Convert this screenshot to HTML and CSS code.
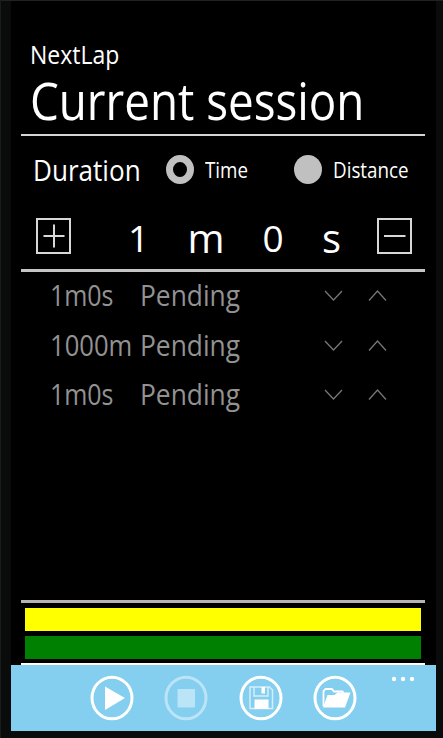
FILE: index.html
```html
<!DOCTYPE html>
<html lang="en">
<head>
<meta charset="utf-8">
<title>NextLap</title>
<link rel="stylesheet" href="styles.css">
</head>
<body>
<div class="phone">
  <main class="page">
    <header class="header">
      <div class="app">NextLap</div>
      <h1 class="title">Current session</h1>
    </header>
    <section class="mode">
      <span class="mode-name">Duration</span>
      <span class="radio on"></span>
      <span class="option">Time</span>
      <span class="radio second"></span>
      <span class="option distance">Distance</span>
    </section>
    <section class="picker">
      <svg class="step" viewBox="0 0 36 37"><path d="M1 1H34V35H1ZM7.500 18H28.500M18 6.500V29.500"/></svg>
      <span class="digit">1</span>
      <span class="unit">m</span>
      <span class="digit">0</span>
      <span class="unit">s</span>
      <svg class="step" viewBox="0 0 36 37"><path d="M1 1H34V35H1ZM7 18H28.500"/></svg>
    </section>
    <section class="laps">
      <div class="lap">
        <span class="amount short">1m0s</span><span class="state">Pending</span>
        <svg class="arrows" viewBox="0 0 64 12"><path d="M1 1L9.500 10L18 1M45 10.500L53.500 1L62 10.500"/></svg>
      </div>
      <div class="lap">
        <span class="amount">1000m</span><span class="state">Pending</span>
        <svg class="arrows" viewBox="0 0 64 12"><path d="M1 1L9.500 10L18 1M45 10.500L53.500 1L62 10.500"/></svg>
      </div>
      <div class="lap">
        <span class="amount short">1m0s</span><span class="state">Pending</span>
        <svg class="arrows" viewBox="0 0 64 12"><path d="M1 1L9.500 10L18 1M45 10.500L53.500 1L62 10.500"/></svg>
      </div>
    </section>
    <section class="bars">
      <div class="bar yellow"></div>
      <div class="bar green"></div>
    </section>
  </main>
  <footer class="appbar">
    <svg class="button" viewBox="0 0 44 46"><ellipse cx="22" cy="23" rx="20" ry="20.800"/><path class="solid" d="M15 11.500L35 23L15 35Z"/></svg>
    <svg class="button disabled" viewBox="0 0 44 46"><ellipse cx="22" cy="23" rx="20" ry="20.800"/><path class="solid" d="M13.500 14H31V32.500H13.500Z"/></svg>
    <svg class="button" viewBox="0 0 44 46"><ellipse cx="22" cy="23" rx="20" ry="20.800"/><path class="thin" d="M11 12H30.500L33.500 15V33.500H11ZM15 12V21H29V12"/><path class="solid" d="M15.500 24.500H29.500V34H15.500ZM22.500 12H26V18.500H22.500Z"/></svg>
    <svg class="button" viewBox="0 0 44 46"><ellipse cx="22" cy="23" rx="20" ry="20.800"/><path class="folder" d="M10.500 31V16L12.500 14H19L21 16.500H29.500L31 19"/><path class="solid" d="M10 32.500L14.500 20H21.500L24.500 17.500H37.500L32 32.500Z"/></svg>
    <svg class="more" viewBox="0 0 24 6"><circle cx="3" cy="3" r="2.200"/><circle cx="12" cy="3" r="2.200"/><circle cx="21" cy="3" r="2.200"/></svg>
  </footer>
</div>
</body>
</html>
```
FILE: styles.css
```css
* { box-sizing: border-box; }

body {
  margin: 0;
  background: #0a0b0b;
  color: #fff;
  font-family: "Open Sans", "Noto Sans", sans-serif;
}

.phone {
  width: 443px;
  height: 738px;
  border-top: 1px solid #222;
  border-left: 1px solid #1b1b1b;
  padding: 0 7.300px 7px 9.500px;
  display: flex;
  flex-direction: column;
}

.page {
  flex: 1;
  background: #000;
  padding: 0 10.700px 0 10.500px;
  display: flex;
  flex-direction: column;
}

.header {
  height: 134.500px;
  border-bottom: 2px solid #d5d5d5;
  padding: 36px 0 0 8.500px;
}

.app,
.title,
.mode-name,
.option,
.amount,
.state {
  white-space: nowrap;
  transform-origin: left center;
}

.app {
  font-size: 25px;
  line-height: 34px;
  transform: scaleX(0.920);
}

.title {
  margin: 0;
  font-size: 51px;
  font-weight: 400;
  line-height: 58px;
  transform: scaleX(0.897);
}

.mode {
  display: flex;
  align-items: center;
  height: 68px;
  padding-left: 11.500px;
}

.mode-name {
  width: 133px;
  font-size: 28.500px;
  line-height: 40px;
  padding-top: 1px;
  transform: scaleX(0.915);
}

.radio {
  width: 28.500px;
  height: 29.500px;
  border-radius: 50%;
  background: #c0c0c0;
}

.on {
  border: 7px solid #c0c0c0;
  background: #000;
}

.option {
  width: 89px;
  margin-left: 10.500px;
  font-size: 21px;
  line-height: 30px;
  transform: scaleX(0.895);
}

.distance { width: 78px; }

.picker {
  display: flex;
  align-items: center;
  height: 68.500px;
  padding-left: 14.500px;
  border-bottom: 3px solid #c5c5c5;
}

.picker > * { flex: none; }

.step {
  width: 36px;
  height: 37px;
}

.step path {
  fill: none;
  stroke: #d8d8d8;
  stroke-width: 2;
}

.digit,
.unit {
  width: 68px;
  padding-top: 4px;
  text-align: center;
  line-height: 50px;
}

.digit { font-size: 37px; }
.unit { font-size: 40px; }
.step + .digit { margin-left: 33px; }
.unit + .digit { width: 67px; }
.digit + .unit { width: 67px; }
.unit:nth-of-type(4) { width: 50px; }
.unit + .step { margin-left: 20px; }

.laps {
  flex: 1;
  margin-top: -1.500px;
  padding-left: 28.500px;
  color: #929292;
}

.lap {
  display: flex;
  align-items: center;
  height: 49.500px;
}

.amount,
.state {
  font-size: 28.500px;
  line-height: 48px;
}

.amount {
  width: 90px;
  transform: scaleX(0.898);
}

.short { transform: scaleX(0.875); }

.state {
  width: 184.500px;
  transform: scaleX(0.925);
}

.arrows {
  width: 64px;
  height: 12px;
  position: relative;
  top: 1px;
}

.arrows path {
  fill: none;
  stroke: #777;
  stroke-width: 1.300;
}

.bars {
  height: 65px;
  padding: 5px 4px 0;
  border-top: 3px solid #b8b4b4;
  border-bottom: 2px solid #fff;
}

.bar {
  height: 23px;
  margin-bottom: 4.500px;
}

.yellow { background: #ff0; }
.green { background: #008000; }

.appbar {
  display: flex;
  height: 66px;
  padding: 10px 0 0 79px;
  background: #84ceef;
}

.button {
  flex: none;
  width: 44px;
  height: 46px;
  margin-right: 30.500px;
  fill: none;
  stroke: #fff;
  stroke-width: 3;
}

.disabled { opacity: 0.45; }

.button .solid {
  fill: #fff;
  stroke: none;
}

.button .thin {
  stroke: #d5eefa;
  stroke-width: 1.500;
}

.button .folder { stroke-width: 1.800; }

.more {
  width: 24px;
  height: 6px;
  margin: 1px 0 0 3.500px;
  fill: #fff;
}
```
